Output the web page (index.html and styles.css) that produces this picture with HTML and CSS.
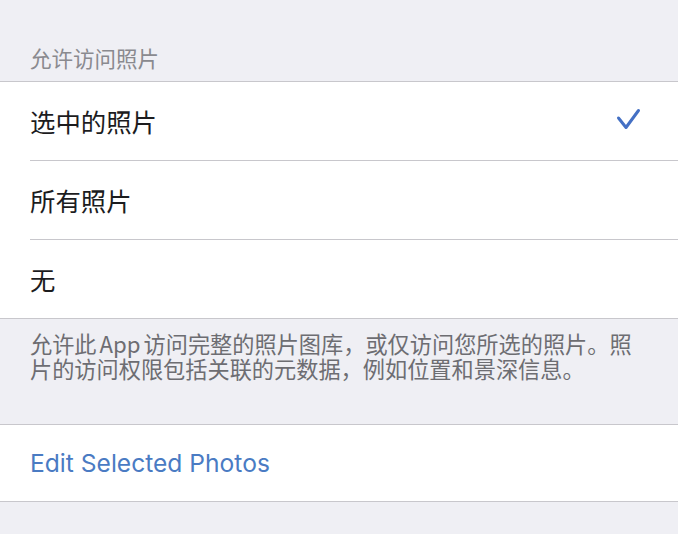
FILE: index.html
```html
<!DOCTYPE html>
<html lang="zh-CN">
<head>
<meta charset="utf-8">
<link rel="stylesheet" href="styles.css">
</head>
<body>
<div class="page">
  <div class="section-header">允许访问照片</div>
  <div class="group">
    <div class="row">
      <span class="label">选中的照片</span>
      <svg class="check" width="26" height="24" viewBox="0 0 26 24"><path d="M2.5 10 L10 19.5 L22.5 2.5" fill="none" stroke="#4470c4" stroke-width="3" stroke-linecap="round" stroke-linejoin="round"/></svg>
    </div>
    <div class="row"><span class="label">所有照片</span></div>
    <div class="row last"><span class="label">无</span></div>
  </div>
  <div class="section-footer">允许此 App 访问完整的照片图库，或仅访问您所选的照片。照片的访问权限包括关联的元数据，例如位置和景深信息。</div>
  <div class="group">
    <div class="row action last"><span class="link">Edit Selected Photos</span></div>
  </div>
</div>
</body>
</html>
```
FILE: styles.css
```css
html, body {
  margin: 0;
  padding: 0;
  background: #efeff4;
}
.page {
  width: 678px;
  height: 534px;
  overflow: hidden;
  background: #efeff4;
  font-family: "Noto Sans CJK SC", "Noto Sans", sans-serif;
}
.section-header {
  padding: 45px 30px 10px;
  font-size: 21.5px;
  line-height: 26px;
  color: #8a8a8f;
}
.group {
  background: #ffffff;
  border-top: 1px solid #c8c7cc;
  border-bottom: 1px solid #c8c7cc;
}
.row {
  position: relative;
  height: 78px;
  display: flex;
  align-items: center;
  justify-content: space-between;
  padding: 0 36px 0 30px;
  border-bottom: 1px solid transparent;
}
.row::after {
  content: "";
  position: absolute;
  left: 30px;
  right: 0;
  bottom: -1px;
  height: 1px;
  background: #c8c7cc;
}
.row.last::after {
  display: none;
}
.row.last {
  border-bottom: none;
}
.label {
  font-size: 25.4px;
  color: #1c1c1e;
}
.check {
  display: block;
  margin-top: -3px;
}
.section-footer {
  padding: 12px 36px 43px 30px;
  font-size: 22.2px;
  line-height: 25px;
  color: #6d6d72;
  word-spacing: -2px;
}
.row.action {
  height: 76px;
}
.link {
  font-family: Inter, "Noto Sans", sans-serif;
  font-size: 24.6px;
  color: #4a7bc3;
}
```
